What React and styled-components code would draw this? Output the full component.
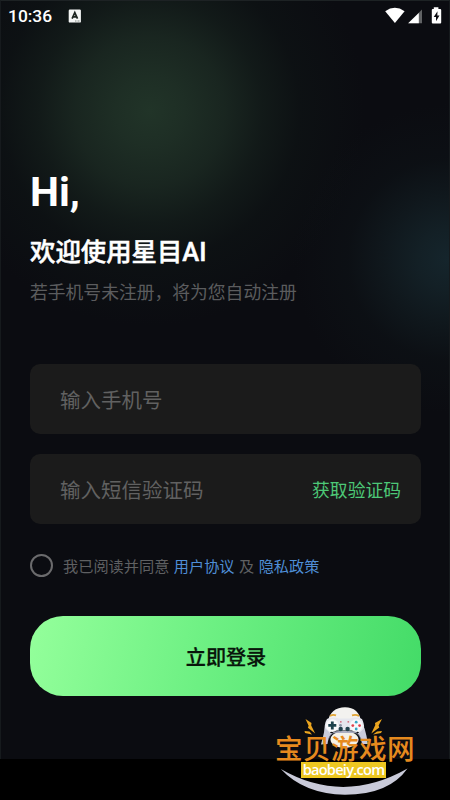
import React, { useState } from "react";
import styled, { createGlobalStyle } from "styled-components";

const GlobalStyle = createGlobalStyle`
  * {
    box-sizing: border-box;
  }

  body {
    margin: 0;
    background: #000;
    font-family: Roboto, "Noto Sans CJK SC", sans-serif;
  }
`;

const Phone = styled.div`
  position: relative;
  display: flex;
  flex-direction: column;
  width: 450px;
  height: 800px;
  overflow: hidden;
  background: #000;
`;

const Screen = styled.div`
  display: flex;
  flex-direction: column;
  height: 759px;
  border-top: 1px solid #1d2224;
  border-left: 1px solid #161a1d;
  border-right: 1px solid #161a1d;
  background:
    radial-gradient(circle at 149px 110px, #213428 0, rgba(31, 48, 38, 0.95) 35px, rgba(28, 43, 35, 0.82) 75px, rgba(22, 34, 29, 0.62) 112px, rgba(16, 25, 23, 0.38) 150px, rgba(11, 12, 17, 0) 215px),
    radial-gradient(circle at 447px 258px, #15252c 0, rgba(20, 34, 40, 0.9) 30px, rgba(18, 29, 34, 0.68) 65px, rgba(14, 21, 25, 0.4) 100px, rgba(11, 12, 17, 0) 155px),
    #0b0c11;
`;

const StatusBar = styled.header`
  display: flex;
  align-items: center;
  height: 30px;
  padding: 0 6px 0 7px;
  color: #fff;
`;

const Time = styled.span`
  width: 60px;
  font-size: 17.4px;
  font-weight: 500;
  line-height: 20px;
`;

const StatusIcons = styled.div`
  display: flex;
  margin-left: auto;
`;

const Content = styled.main`
  display: flex;
  flex-direction: column;
  padding: 138px 28px 0 29px;
`;

const Greeting = styled.h1`
  margin: 0;
  color: #fff;
  font-size: 41px;
  font-weight: 700;
  line-height: 46px;
`;

const Title = styled.h2`
  margin: 19px 0 0;
  color: #fff;
  font-size: 25.4px;
  font-weight: 500;
  line-height: 36px;
  -webkit-text-stroke: 0.5px #fff;
`;

const Hint = styled.p`
  margin: 10px 0 0;
  color: #5b5c5e;
  font-size: 17.8px;
  line-height: 26px;
`;

const Form = styled.form`
  display: flex;
  flex-direction: column;
  gap: 20px;
  margin-top: 58px;
`;

const Field = styled.label`
  display: flex;
  align-items: center;
  justify-content: space-between;
  height: 70px;
  padding: 3px 20px 0 30px;
  border-radius: 10px;
  background: #1b1b1b;
`;

const Input = styled.input`
  flex: 1;
  min-width: 0;
  height: 40px;
  padding: 0;
  border: none;
  outline: none;
  background: none;
  color: #fff;
  font-family: inherit;
  font-size: 20.5px;

  &::placeholder {
    color: #616161;
    opacity: 1;
  }
`;

const CodeButton = styled.button`
  padding: 0;
  border: none;
  background: none;
  color: #4dc877;
  font-family: inherit;
  font-size: 17.8px;
  line-height: 26px;
`;

const Agreement = styled.div`
  display: flex;
  align-items: center;
  height: 24px;
  margin-top: 10px;
  color: #5f6062;
  font-size: 15.2px;
  line-height: 22px;
  white-space: pre;
  word-spacing: 0.7px;

  span,
  a {
    padding-top: 2px;
  }
`;

const Radio = styled.button`
  width: 23px;
  height: 23px;
  margin: 0 10px 2px 0;
  padding: 0;
  border: 2px solid #6b6b6d;
  border-radius: 50%;
  background: ${(props) => (props.$checked ? "#4dc877" : "transparent")};
`;

const Link = styled.a`
  color: #4f8ed6;
`;

const Submit = styled.button`
  height: 80px;
  margin-top: 18px;
  padding: 0 0 0 1px;
  border: none;
  border-radius: 33px;
  background: linear-gradient(104deg, #94ff9b 0%, #6df083 45%, #43db67 100%);
  color: #08150a;
  font-family: inherit;
  font-size: 20.1px;
  font-weight: 500;
  -webkit-text-stroke: 0.3px #08150a;
`;

const Watermark = styled.div`
  position: absolute;
  left: 270px;
  top: 703px;
  width: 150px;
  height: 97px;
`;

const WatermarkArt = styled.svg`
  position: absolute;
  inset: 0;
`;

const SiteName = styled.div`
  position: relative;
  margin-top: 31px;
  padding-left: 5px;
  color: #e68a1e;
  font-family: "Noto Sans CJK SC", sans-serif;
  font-size: 27.6px;
  font-weight: 500;
  letter-spacing: 0.4px;
  line-height: 27px;
  white-space: nowrap;
`;

const SiteUrl = styled.div`
  position: relative;
  display: flex;
  align-items: center;
  justify-content: center;
  width: 85px;
  height: 16px;
  margin: 1px 0 0 31px;
  padding-bottom: 2px;
  background: #edc721;
  color: #fff;
  font-family: "Open Sans", sans-serif;
  font-size: 14.6px;
  font-weight: 600;
  letter-spacing: -0.75px;
  line-height: 14px;
`;

const KeyboardIcon = () => (
  <svg width="14" height="15" viewBox="0 0 14 15">
    <rect x="0.7" y="0.6" width="12.2" height="13" rx="1.2" fill="#f4f6f5" />
    <path d="M4.1 9.6 6.8 3.6 9.5 9.6M5.1 7.8h3.4" fill="none" stroke="#1b241f" strokeWidth="1.7" />
    <path d="M7 12h5" stroke="#7c8580" strokeWidth="1" strokeDasharray="1 0.5" />
  </svg>
);

const SignalIcons = () => (
  <svg width="60" height="20" viewBox="0 0 60 20">
    <path d="M2.2 5.2Q11.8-1.6 21.6 5.2L11.9 17Z" fill="#fff" />
    <path d="M39 3.6V17.2H25.2Z" fill="#606264" />
    <path d="M35.8 6.9V17.2H25.2Z" fill="#fff" />
    <path d="M50.8 1.2h4.6v1.7h1.8q1 0 1 1V16.6q0 1-1 1h-7.4q-1 0-1-1V3.9q0-1 1-1h1z" fill="#fff" />
    <path d="M54.5 5.2 50.7 11h2.3v4.3L56.5 9.5h-2.2z" fill="#0b0c11" />
  </svg>
);

const GamepadArt = () => (
  <WatermarkArt width="150" height="97" viewBox="0 0 150 97">
    {/* smile */}
    <path d="M10.8 66Q73 102 137.5 65.5Q119 91.7 75 91.8Q34 91 10.8 66Z" fill="#c9cad9" />
    {/* head */}
    <path d="M57.5 20C59 9 66 4.2 75 4.2S90 9 91.5 20Z" fill="#f3f2ef" />
    <ellipse cx="74.5" cy="36.5" rx="14" ry="8.5" fill="#f5f1e7" />
    {/* gamepad body */}
    <path d="M57 16Q63 13.5 69 15.5H80Q86 13.5 92 16C95 22 94 26 94 29Q93 33 90 31L87 27.5H62L59 31Q56 34 54.5 29C54.5 24 54.5 20 57 16Z" fill="#e6e7ee" />
    <path d="M55 25Q53 34 51 41.5L57.5 41Q59 28.2 68 28.2H82Q90 28.2 92 41L98 41Q96.5 32 94.5 25L89 30H60Z" fill="#c9cbdb" />
    <path d="M58.5 36Q61 29 68 29H82Q88 29 91 36" fill="none" stroke="#777b95" strokeWidth="0.7" />
    <circle cx="62.3" cy="22.6" r="6.3" fill="#f8f8fa" />
    <circle cx="86.2" cy="22.6" r="6.3" fill="#f8f8fa" />
    <path d="M62.3 18.4v8M58.3 22.4h8" stroke="#1d414c" strokeWidth="2.8" />
    <circle cx="86.2" cy="19.2" r="1.4" fill="#36a6c4" />
    <circle cx="86.2" cy="26" r="1.4" fill="#36a6c4" />
    <circle cx="82.8" cy="22.6" r="1.4" fill="#e2404c" />
    <circle cx="89.6" cy="22.6" r="1.4" fill="#e2404c" />
    <path d="M70 18.9h1.6M77.5 18.9h1.6" stroke="#d15667" strokeWidth="1.4" />
    <circle cx="70.5" cy="22.3" r="1.4" fill="#8f94a8" />
    <circle cx="70.7" cy="26" r="2.2" fill="#24434e" />
    <circle cx="77.6" cy="26" r="2.2" fill="#24434e" />
    <path d="M60 13Q63 11.2 66 12.4M82 12.4Q86 11.2 89 13" fill="none" stroke="#e0a332" strokeWidth="1.7" />
    {/* sparks */}
    <path d="M35.5 16l6 4-.3 2.5 4 8-7.3-5.8.7-2z" fill="#eba51f" />
    <path d="M112 16l-7 4 .3 2-4 8.5 8-6-.7-2z" fill="#eba51f" />
    <path d="M34.5 28l5 .6 2.5 3-7-1.7zM112 28l-5 .6-4 3 8-1.7z" fill="#eba51f" />
  </WatermarkArt>
);

const App = () => {
  const [phone, setPhone] = useState("");
  const [code, setCode] = useState("");
  const [agreed, setAgreed] = useState(false);

  return (
    <Phone>
      <GlobalStyle />
      <Screen>
        <StatusBar>
          <Time>10:36</Time>
          <KeyboardIcon />
          <StatusIcons>
            <SignalIcons />
          </StatusIcons>
        </StatusBar>
        <Content>
          <Greeting>Hi,</Greeting>
          <Title>欢迎使用星目AI</Title>
          <Hint>若手机号未注册，将为您自动注册</Hint>
          <Form onSubmit={(e) => e.preventDefault()}>
            <Field>
              <Input
                placeholder="输入手机号"
                value={phone}
                onChange={(e) => setPhone(e.target.value)}
              />
            </Field>
            <Field>
              <Input
                placeholder="输入短信验证码"
                value={code}
                onChange={(e) => setCode(e.target.value)}
              />
              <CodeButton type="button">获取验证码</CodeButton>
            </Field>
            <Agreement>
              <Radio type="button" $checked={agreed} onClick={() => setAgreed(!agreed)} />
              <span>我已阅读并同意 </span>
              <Link>用户协议</Link>
              <span> 及 </span>
              <Link>隐私政策</Link>
            </Agreement>
            <Submit type="submit">立即登录</Submit>
          </Form>
        </Content>
      </Screen>
      <Watermark>
        <GamepadArt />
        <SiteName>宝贝游戏网</SiteName>
        <SiteUrl>baobeiy.com</SiteUrl>
      </Watermark>
    </Phone>
  );
};

export default App;
